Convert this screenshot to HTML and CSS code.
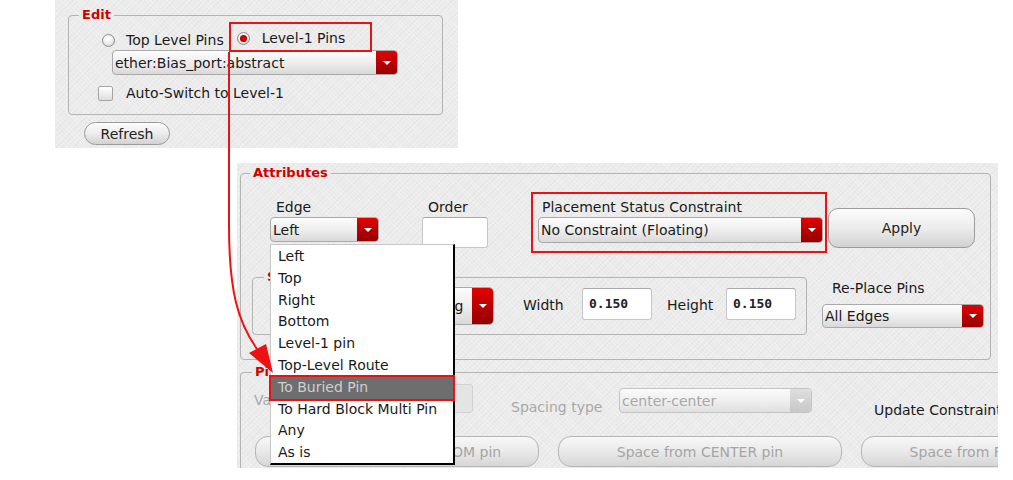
FILE: index.html
```html
<!DOCTYPE html>
<html>
<head>
<meta charset="utf-8">
<link rel="stylesheet" href="styles.css">
</head>
<body>
<div class="page">
  <section class="panel panel-edit">
    <fieldset class="group group-edit">
      <legend class="group-title">Edit</legend>
      <div class="edit-radios">
        <label class="radio"><span class="radio-mark"></span><span>Top Level Pins</span></label>
        <div class="callout callout-level">
          <label class="radio"><span class="radio-mark is-on"></span><span>Level-1 Pins</span></label>
        </div>
      </div>
      <div class="combo combo-cell"><span class="combo-text">ether:Bias_port:abstract</span><span class="combo-btn"><span class="combo-arrow"></span></span></div>
      <label class="check"><span class="check-mark"></span><span>Auto-Switch to Level-1</span></label>
    </fieldset>
    <button class="btn btn-refresh">Refresh</button>
  </section>

  <section class="panel panel-attr">
    <fieldset class="group group-attr">
      <legend class="group-title">Attributes</legend>
      <div class="attr-top">
        <div class="field field-edge">
          <span class="field-label">Edge</span>
          <div class="combo combo-edge"><span class="combo-text">Left</span><span class="combo-btn"><span class="combo-arrow"></span></span></div>
        </div>
        <div class="field field-order">
          <span class="field-label">Order</span>
          <div class="input input-order"></div>
        </div>
        <div class="callout callout-status">
          <span class="field-label">Placement Status Constraint</span>
          <div class="combo combo-status"><span class="combo-text">No Constraint (Floating)</span><span class="combo-btn"><span class="combo-arrow"></span></span></div>
        </div>
        <button class="btn btn-apply">Apply</button>
      </div>
      <div class="attr-mid">
        <fieldset class="group group-size">
          <legend class="group-title">Size</legend>
          <div class="size-row">
            <span class="field-label label-layer">Layer</span>
            <div class="combo combo-layer"><span class="combo-text">Metal2 drawing</span><span class="combo-btn"><span class="combo-arrow"></span></span></div>
            <span class="field-label label-dim label-width">Width</span>
            <div class="input input-num">0.150</div>
            <span class="field-label label-dim label-height">Height</span>
            <div class="input input-num">0.150</div>
          </div>
        </fieldset>
        <div class="field field-replace">
          <span class="field-label label-replace">Re-Place Pins</span>
          <div class="combo combo-replace"><span class="combo-text">All Edges</span><span class="combo-btn"><span class="combo-arrow"></span></span></div>
        </div>
      </div>
    </fieldset>

    <fieldset class="group group-pin">
      <legend class="group-title">Pin Spacing</legend>
      <div class="pin-row">
        <span class="field-label label-value is-disabled">Value</span>
        <div class="input input-value"></div>
        <span class="field-label label-spacing is-disabled">Spacing type</span>
        <div class="combo combo-spacing is-disabled"><span class="combo-text">center-center</span><span class="combo-btn"><span class="combo-arrow"></span></span></div>
        <span class="field-label label-update">Update Constraints</span>
      </div>
      <div class="pin-buttons">
        <button class="btn btn-space">Space from LEFT/BOTTOM pin</button>
        <button class="btn btn-space">Space from CENTER pin</button>
        <button class="btn btn-space">Space from RIGHT/TOP pin</button>
      </div>
    </fieldset>

    <ul class="menu">
      <li class="menu-item">Left</li>
      <li class="menu-item">Top</li>
      <li class="menu-item">Right</li>
      <li class="menu-item">Bottom</li>
      <li class="menu-item">Level-1 pin</li>
      <li class="menu-item">Top-Level Route</li>
      <li class="menu-item is-active">To Buried Pin</li>
      <li class="menu-item">To Hard Block Multi Pin</li>
      <li class="menu-item">Any</li>
      <li class="menu-item">As is</li>
    </ul>
  </section>

  <svg class="arrow" width="1013" height="480" viewBox="0 0 1013 480">
    <path d="M229 52 L229 225 C229 292 238 322 257 349" fill="none" stroke="#ee1111" stroke-width="2"/>
    <polygon points="249,353 266,344 273,373" fill="#ee1111"/>
  </svg>
</div>
</body>
</html>
```

FILE: styles.css
```css
* { box-sizing: border-box; }

html, body {
  margin: 0;
  padding: 0;
  background: #ffffff;
}

body {
  font-family: "DejaVu Sans", "Liberation Sans", sans-serif;
  font-size: 14px;
  line-height: 16px;
  color: #1a1a1a;
}

.page {
  position: relative;
  width: 1013px;
  height: 480px;
  overflow: hidden;
}

/* ---------- panels ---------- */
.panel {
  background-color: #ebebeb;
  background-image:
    repeating-linear-gradient(45deg, rgba(255,255,255,0.25) 0 1px, transparent 1px 3px),
    repeating-linear-gradient(-45deg, rgba(0,0,0,0.025) 0 1px, transparent 1px 4px);
}

.panel-edit {
  width: 403px;
  height: 148px;
  margin-left: 55px;
  padding: 8px 0 0 13px;
}

.panel-attr {
  position: relative;
  width: 761px;
  height: 305px;
  margin-top: 15px;
  margin-left: 237px;
  padding: 3px 0 0 3px;
  overflow: hidden;
}

/* ---------- group boxes ---------- */
.group {
  margin: 0;
  padding: 0;
  min-width: 0;
  border: 1px solid #b3b3b3;
  border-radius: 4px;
}

.group-title {
  padding: 0 3px;
  font-weight: bold;
  font-size: 13px;
  line-height: 14px;
  color: #d00000;
}

.group-edit {
  width: 375px;
  padding-bottom: 13px;
}
.group-edit .group-title { margin-left: 10px; }

.edit-radios {
  display: flex;
  align-items: flex-start;
  padding-left: 33px;
}

.radio {
  display: flex;
  align-items: center;
  gap: 11px;
  white-space: nowrap;
}

.radio-mark {
  position: relative;
  width: 13px;
  height: 13px;
  border: 1px solid #8d8d8d;
  border-radius: 50%;
  background: radial-gradient(circle at 45% 35%, #ffffff 0, #f2f2f2 40%, #c9c9c9 100%);
}
.radio-mark.is-on::after {
  content: "";
  position: absolute;
  left: 3px;
  top: 3px;
  width: 5px;
  height: 5px;
  border-radius: 50%;
  background: #e10000;
  box-shadow: 0 0 0 1px #a00000;
}

.edit-radios > .radio { margin-top: 10px; }

.callout {
  position: relative;
  z-index: 1;
  border: 2px solid #ee1111;
}

.callout-level {
  height: 30px;
  margin-left: 5px;
  padding: 6px 25px 0 6px;
}
.callout-level .radio { gap: 12px; }

.check {
  display: flex;
  align-items: center;
  gap: 13px;
  margin: 10px 0 0 29px;
}

.check-mark {
  width: 15px;
  height: 15px;
  border: 1px solid #a5a5a5;
  border-radius: 2px;
  background: linear-gradient(#ffffff, #dedede);
}

/* ---------- combo boxes ---------- */
.combo {
  display: flex;
  align-items: stretch;
  border: 1px solid #a9a9a9;
  border-radius: 4px;
  background: linear-gradient(#fdfdfd 0%, #ececec 55%, #d9d9d9 100%);
  overflow: hidden;
}

.combo-text {
  flex: 1;
  padding-left: 2px;
  white-space: nowrap;
  overflow: hidden;
  align-self: center;
}

.combo-btn {
  width: 21px;
  flex: none;
  display: flex;
  align-items: center;
  justify-content: center;
  background: linear-gradient(#e40000, #b30000 60%, #950000);
}

.combo-arrow {
  width: 0;
  height: 0;
  border-left: 4px solid transparent;
  border-right: 4px solid transparent;
  border-top: 4px solid #ffffff;
}

.combo-cell {
  width: 286px;
  height: 25px;
  margin: -2px 0 0 43px;
}

/* ---------- buttons ---------- */
.btn {
  font-family: inherit;
  font-size: 14px;
  color: #222;
  border: 1px solid #9c9c9c;
  border-radius: 12px;
  background: linear-gradient(#fcfcfc 0%, #ececec 50%, #d2d2d2 100%);
  padding: 0;
  white-space: nowrap;
}

.btn-refresh {
  display: block;
  width: 86px;
  height: 23px;
  margin: 7px 0 0 16px;
}

.btn-apply {
  width: 147px;
  height: 40px;
  margin: 28px 0 0 1px;
  border-radius: 10px;
  flex: none;
}

/* ---------- attributes ---------- */
.group-attr { width: 751px; padding-bottom: 24px; }
.group-attr > .group-title { margin-left: 9px; }

.attr-top {
  display: flex;
  align-items: flex-start;
}

.field {
  display: flex;
  flex-direction: column;
  flex: none;
}

.field-label {
  white-space: nowrap;
}

.field-edge { width: 109px; margin: 19px 0 0 29px; }
.field-edge .field-label { margin: 0 0 2px 6px; }
.combo-edge { height: 25px; }

.field-order { width: 66px; margin: 19px 0 0 43px; }
.field-order .field-label { margin: 0 0 2px 6px; }

.input {
  background: #ffffff;
  border: 1px solid #c6c6c6;
  border-top-color: #a8a8a8;
  border-radius: 3px;
}

.input-order { height: 31px; }

.callout-status {
  width: 296px;
  height: 61px;
  margin: 12px 0 0 43px;
  padding: 5px 2px 0 5px;
  display: flex;
  flex-direction: column;
  flex: none;
}
.callout-status .field-label { margin: 0 0 2px 4px; }
.combo-status { height: 26px; }

.attr-mid {
  display: flex;
  align-items: flex-start;
  margin-top: 17px;
}

.group-size {
  width: 555px;
  margin-left: 11px;
  padding-bottom: 9px;
  flex: none;
}
.group-size > .group-title { margin-left: 11px; }

.size-row {
  display: flex;
  align-items: flex-start;
  padding-left: 16px;
}

.size-row > .field-label { margin-top: 13px; }

.label-layer { width: 80px; }

.combo-layer {
  width: 145px;
  height: 38px;
  margin-top: 3px;
  border-radius: 5px;
}
.combo-layer .combo-text { padding-left: 5px; }

.label-width { width: 59px; margin-left: 29px; }
.label-height { width: 59px; margin-left: 15px; }

.input-num {
  width: 70px;
  height: 32px;
  margin-top: 4px;
  padding-left: 6px;
  display: flex;
  align-items: center;
  font-family: "DejaVu Sans Mono", "Liberation Mono", monospace;
  font-weight: bold;
  font-size: 13px;
  color: #222;
}

.field-replace { width: 162px; margin: 10px 0 0 15px; }
.label-replace { margin-left: 10px; }
.combo-replace { height: 24px; margin-top: 8px; }

/* ---------- pin spacing ---------- */
.group-pin {
  width: 790px;
  height: 140px;
  margin-top: 5px;
  border-right: none;
}
.group-pin > .group-title { margin-left: 11px; }

.pin-row {
  display: flex;
  align-items: flex-start;
  margin-top: 5px;
  padding-left: 13px;
}

.is-disabled { color: #a8a8a8; }

.label-value { width: 151px; margin-top: 8px; }

.input-value {
  width: 68px;
  height: 29px;
  background: #e4e4e4;
  border-color: #d2d2d2;
}

.label-spacing { width: 108px; margin: 15px 0 0 38px; }

.combo-spacing {
  width: 193px;
  height: 25px;
  margin-top: 4px;
  border-color: #c4c4c4;
  background: linear-gradient(#fbfbfb, #eeeeee 55%, #e0e0e0);
}
.combo-spacing .combo-btn { background: linear-gradient(#dedede, #c8c8c8); }

.label-update { margin: 18px 0 0 62px; color: #1a1a1a; }

.pin-buttons {
  display: flex;
  gap: 19px;
  margin-top: 18px;
  padding-left: 14px;
}

.btn-space {
  width: 284px;
  height: 31px;
  color: #a5a5a5;
  border-color: #b5b5b5;
  border-radius: 13px;
  background: linear-gradient(#f8f8f8 0%, #e9e9e9 50%, #d6d6d6 100%);
  flex: none;
}

/* ---------- popup menu ---------- */
.menu {
  position: absolute;
  left: 33px;
  top: 81px;
  width: 185px;
  height: 221px;
  margin: 0;
  padding: 1px 0 0;
  list-style: none;
  background: #ffffff;
  border-left: 1px solid #c8c8c8;
  border-top: 1px solid #c8c8c8;
  border-right: 2px solid #000000;
  border-bottom: 2px solid #000000;
  z-index: 2;
}

.menu-item {
  height: 21.8px;
  line-height: 21.8px;
  padding-left: 7px;
  white-space: nowrap;
  color: #1a1a1a;
}

.menu-item.is-active {
  background: #6e6e6e;
  color: #cfcfcf;
  outline: 2px solid #ee1111;
  outline-offset: 0;
}

/* ---------- annotation arrow ---------- */
.arrow {
  position: absolute;
  left: 0;
  top: 0;
  pointer-events: none;
  z-index: 5;
}
```
